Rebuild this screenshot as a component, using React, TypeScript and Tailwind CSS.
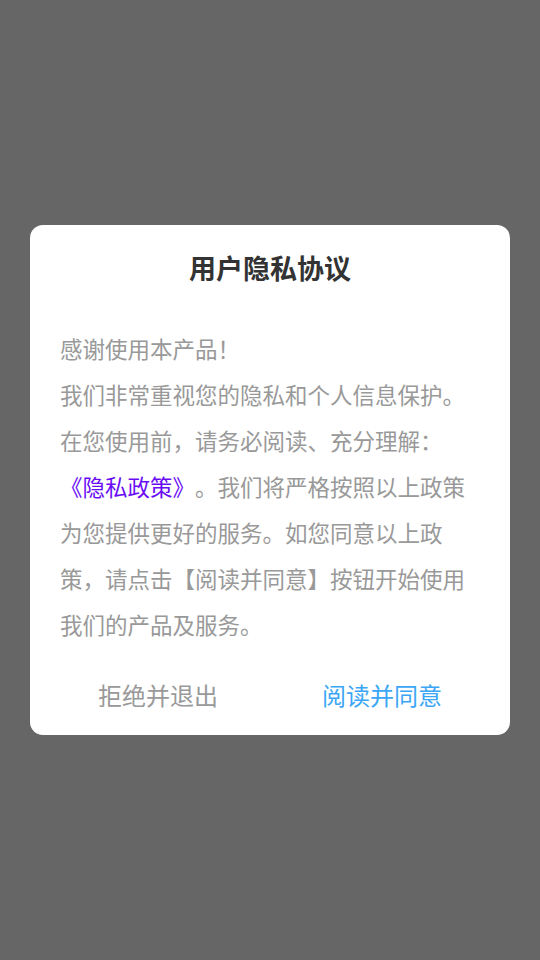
import React from "react";

export default function App() {
  const font = { fontFamily: '"Noto Sans CJK SC", "Noto Sans", sans-serif' };
  return (
    <div className="w-[540px] h-[960px] bg-[#666666] flex flex-col items-center pt-[225px]" style={font}>
      <div className="w-[480px] h-[510px] bg-white rounded-[13px] flex flex-col [text-spacing-trim:space-all]">
        <div className="pt-[28px] h-[58px] text-center text-[27px] leading-[30px] font-bold text-[#333333]">
          用户隐私协议
        </div>
        <div className="mt-[42px] px-[30px] text-[22.5px] leading-[46px] text-[#999999]">
          <div>感谢使用本产品！</div>
          <div>我们非常重视您的隐私和个人信息保护。</div>
          <div>在您使用前，请务必阅读、充分理解：</div>
          <div>
            <span className="text-[#6a0df5]">《隐私政策》</span>
            。我们将严格按照以上政策为您提供更好的服务。如您同意以上政策，请点击【阅读并同意】按钮开始使用我们的产品及服务。
          </div>
        </div>
        <div className="mt-auto h-[80px] px-[16px] flex text-[24px]">
          <div className="flex-1 flex items-center justify-center text-[#999999]">拒绝并退出</div>
          <div className="flex-1 flex items-center justify-center text-[#3aa6f5]">阅读并同意</div>
        </div>
      </div>
    </div>
  );
}
